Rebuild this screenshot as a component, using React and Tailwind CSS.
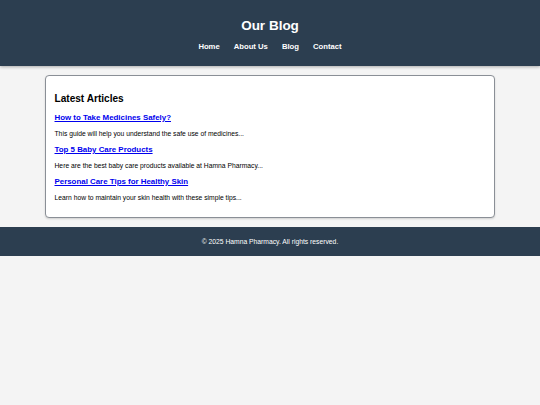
import React from 'react';

const NAV = ['Home', 'About Us', 'Blog', 'Contact'];

const ARTICLES = [
  {
    title: 'How to Take Medicines Safely?',
    text: 'This guide will help you understand the safe use of medicines...',
  },
  {
    title: 'Top 5 Baby Care Products',
    text: 'Here are the best baby care products available at Hamna Pharmacy...',
  },
  {
    title: 'Personal Care Tips for Healthy Skin',
    text: 'Learn how to maintain your skin health with these simple tips...',
  },
];

export default function App() {
  return (
    <div
      className="min-h-[405px] bg-[#f4f4f4] text-black"
      style={{ fontFamily: '"Liberation Sans", Arial, sans-serif' }}
    >
      {/* Header */}
      <header className="h-[66px] bg-[#2c3e50] text-white flex flex-col items-center shadow-[0_1px_3px_rgba(0,0,0,0.3)] relative">
        <h1 className="mt-[18px] text-[13.5px] leading-[16px] font-bold">Our Blog</h1>
        <nav className="mt-[8px] flex gap-[14px] text-[7.7px] leading-[9px] font-bold">
          {NAV.map((item) => (
            <a key={item} href="#" className="text-white">
              {item}
            </a>
          ))}
        </nav>
      </header>

      {/* Articles card */}
      <main className="pt-[9px] pb-[9px] flex justify-center">
        <section className="w-[450px] bg-white border-[1.5px] border-[#8a8f96] rounded-[4px] shadow-[0_1px_2px_rgba(0,0,0,0.15)] pt-[17px] pb-[15px] px-[8.5px]">
          <h2 className="text-[10.1px] leading-[12px] font-bold">Latest Articles</h2>
          {ARTICLES.map((a, i) => (
            <div key={a.title}>
              <a
                href="#"
                className={`block ${i === 0 ? 'mt-[8px]' : 'mt-[7px]'} text-[7.9px] leading-[10px] font-bold text-[#0000ee] underline`}
              >
                {a.title}
              </a>
              <p className="mt-[6px] text-[6.75px] leading-[9px]">{a.text}</p>
            </div>
          ))}
        </section>
      </main>

      {/* Footer */}
      <footer className="h-[29px] bg-[#2c3e50] text-white flex items-center justify-center">
        <p className="text-[6.75px] leading-[9px]">© 2025 Hamna Pharmacy. All rights reserved.</p>
      </footer>
    </div>
  );
}
